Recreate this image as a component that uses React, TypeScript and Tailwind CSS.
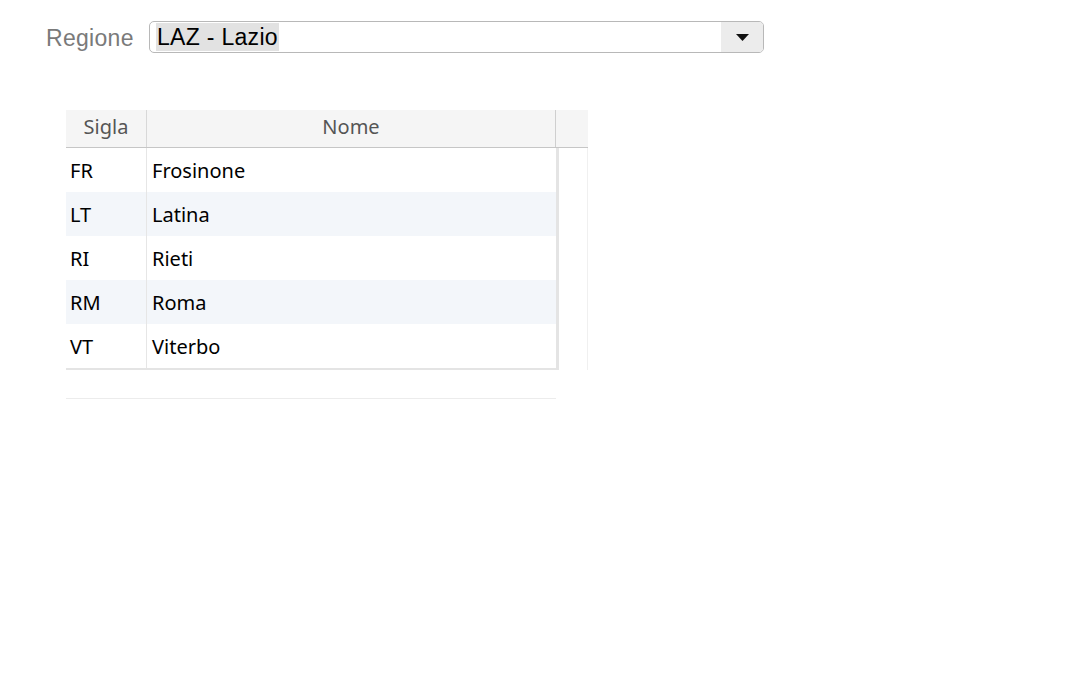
import React from "react";

const rows = [
  ["FR", "Frosinone"],
  ["LT", "Latina"],
  ["RI", "Rieti"],
  ["RM", "Roma"],
  ["VT", "Viterbo"],
];

export default function App() {
  return (
    <div className="w-[1072px] h-[678px] bg-white pl-[46px] pt-[21px]">
      <div className="flex items-center h-[32px]">
        <span className="text-[23px] text-[#7a7a7a] w-[103px] leading-none mt-[2px] tracking-[0.3px]" style={{ fontFamily: '"Liberation Sans", Arial, sans-serif' }}>
          Regione
        </span>
        <div className="relative flex items-center w-[615px] h-[32px] border border-[#b8b8b8] rounded-[5px] bg-white overflow-hidden">
          <div className="flex-1 pl-[6px] flex items-center">
            <span
              className="bg-[#e2e2e2] text-black text-[23px] leading-[28px] h-[28px] px-[1px] tracking-[0.3px]"
              style={{ fontFamily: '"Liberation Sans", Arial, sans-serif' }}
            >
              LAZ - Lazio
            </span>
          </div>
          <div className="w-[42px] h-full bg-[#ececec] flex items-center justify-center">
            <svg width="13" height="7" viewBox="0 0 13 7">
              <polygon points="0,0 13,0 6.5,7" fill="#111" />
            </svg>
          </div>
        </div>
      </div>

      <div className="ml-[20px] mt-[57px] w-[522px]" style={{ fontFamily: '"Noto Sans", "Open Sans", sans-serif' }}>
        <div className="flex h-[38px] bg-[#f5f5f5] border-b border-[#c6c6c6]">
          <div className="w-[81px] flex items-center justify-center pb-[3px] text-[20px] text-[#555] border-r border-[#d8d8d8]">Sigla</div>
          <div className="w-[409px] flex items-center justify-center pb-[3px] text-[20px] text-[#555] border-r border-[#cfcfcf]">Nome</div>
          <div className="flex-1" />
        </div>
        <div className="flex">
          <div className="w-[493px] border-r-[3px] border-b-[2px] border-[#e4e4e4]">
            {rows.map(([s, n], i) => (
              <div key={s} className={`flex h-[44px] ${i % 2 === 1 ? "bg-[#f3f6fa]" : "bg-white"}`}>
                <div className="w-[81px] pl-[4px] pt-[1px] flex items-center text-[20px] text-black border-r border-[#e6e6e6]">{s}</div>
                <div className="flex-1 pl-[5px] pt-[1px] flex items-center text-[20px] text-black">{n}</div>
              </div>
            ))}
          </div>
          <div className="w-[29px] border-r border-[#f0f0f0]" />
        </div>
        <div className="mt-[28px] w-[490px] h-[1px] bg-[#ececec]" />
      </div>
    </div>
  );
}
